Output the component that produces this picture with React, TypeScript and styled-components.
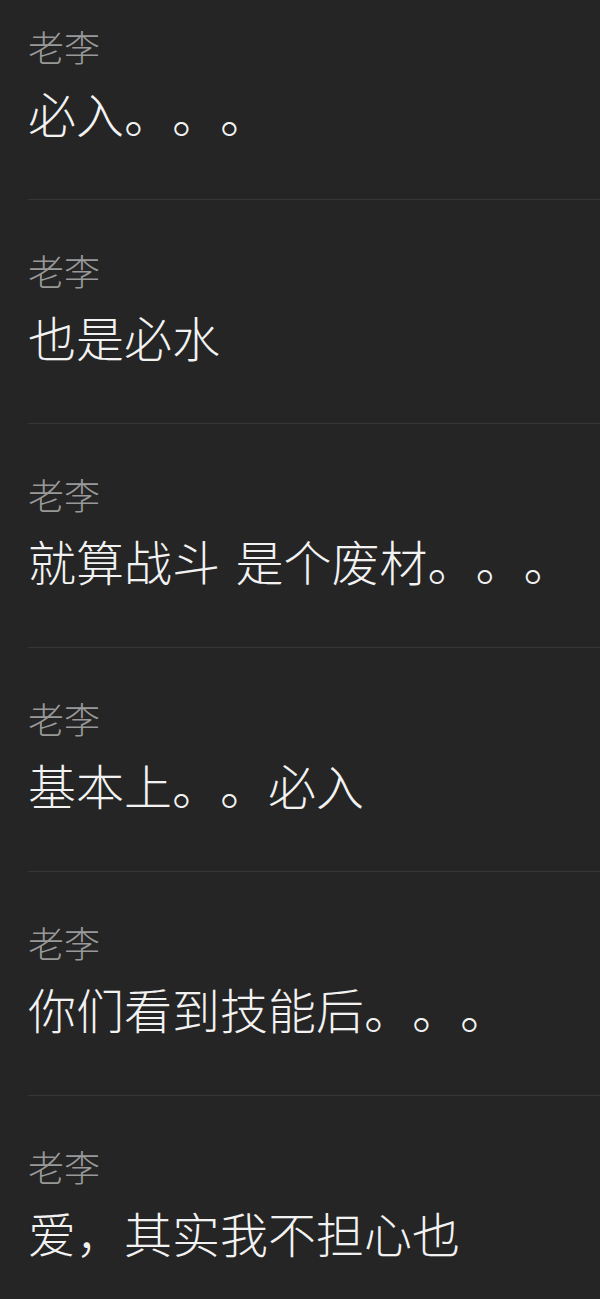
import React from "react";
import styled, { createGlobalStyle } from "styled-components";

const GlobalStyle = createGlobalStyle`
  html, body {
    margin: 0;
    padding: 0;
    background: #252525;
  }
  body {
    font-family: "Noto Sans CJK SC Light", "Noto Sans CJK SC DemiLight", "Noto Sans CJK SC", "Noto Sans", sans-serif;
    overflow: hidden;
  }
`;

const Page = styled.div`
  background: #252525;
  min-height: 1299px;
  width: 600px;
  overflow: hidden;
`;

const List = styled.ul`
  list-style: none;
  margin: -24px 0 0 28px;
  padding: 0;
  display: flex;
  flex-direction: column;
`;

const Item = styled.li`
  height: 224px;
  box-sizing: border-box;
  padding-top: 46px;
  border-bottom: 1px solid #363636;
  display: flex;
  flex-direction: column;
  gap: 10px;
`;

const Name = styled.div`
  font-size: 36px;
  line-height: 48px;
  font-weight: 200;
  color: #999999;
  white-space: nowrap;
`;

const Message = styled.div`
  font-size: 48px;
  line-height: 64px;
  font-weight: 200;
  color: #f2f2f2;
  white-space: pre;
  word-spacing: 5px;
  text-spacing-trim: space-all;
  font-kerning: none;
`;

const messages = [
  "必入。。。",
  "也是必水",
  "就算战斗 是个废材。。。",
  "基本上。。必入",
  "你们看到技能后。。。",
  "爱，其实我不担心也",
];

export default function App() {
  return (
    <Page>
      <GlobalStyle />
      <List>
        {messages.map((m, i) => (
          <Item key={i}>
            <Name>老李</Name>
            <Message>{m}</Message>
          </Item>
        ))}
      </List>
    </Page>
  );
}
